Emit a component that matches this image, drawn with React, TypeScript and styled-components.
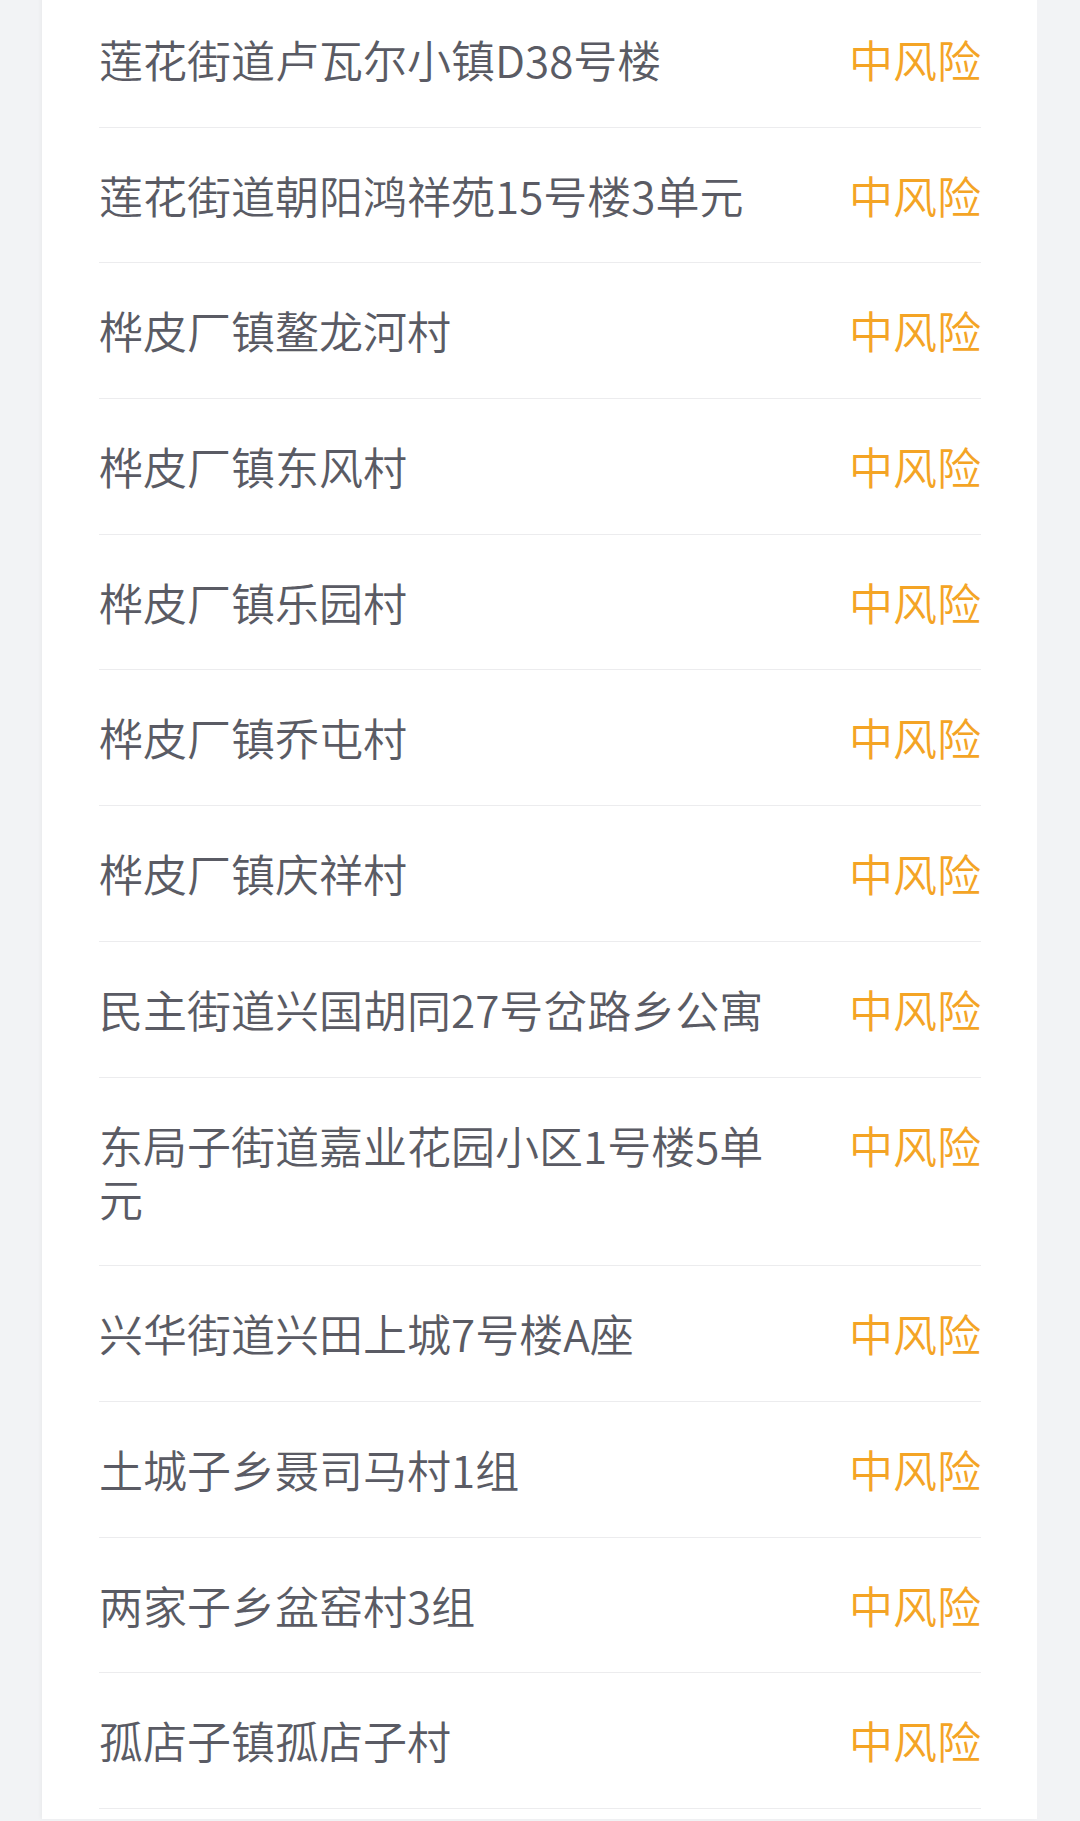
import React, { FC } from 'react';
import styled, { createGlobalStyle } from 'styled-components';

const GlobalStyle = createGlobalStyle`
  html, body {
    margin: 0;
    padding: 0;
    background-color: #f2f3f5;
  }

  body {
    font-family: 'Noto Sans CJK SC', 'Noto Sans', sans-serif;
    overflow: hidden;
  }
`;

const Page = styled.div`
  padding: 0 43px 3px 42px;
  height: 1821px;
  box-sizing: border-box;
  overflow: hidden;
`;

const Card = styled.div`
  background-color: #ffffff;
  margin-top: -8px;
  padding: 0 56px 10px 57px;
  box-shadow: -2px 0px 4px rgba(0, 0, 0, 0.03);
`;

const Row = styled.div`
  display: flex;
  justify-content: space-between;
  align-items: flex-start;
  gap: 56px;
  padding: 41px 0 40.7px;
  border-bottom: 1px solid #ececee;
`;

const Place = styled.div`
  flex: 1;
  font-size: 44px;
  font-weight: 350;
  line-height: 53px;
  color: #5a5b64;
  word-break: break-all;
`;

interface RiskProps {
  level: 'high' | 'medium';
}

const Risk = styled.div<RiskProps>`
  flex-shrink: 0;
  font-size: 44px;
  font-weight: 350;
  line-height: 53px;
  color: ${ props => props.level === 'high' ? '#e8453c' : '#f4a425' };
`;

const places = [
  '莲花街道卢瓦尔小镇D38号楼',
  '莲花街道朝阳鸿祥苑15号楼3单元',
  '桦皮厂镇鳌龙河村',
  '桦皮厂镇东风村',
  '桦皮厂镇乐园村',
  '桦皮厂镇乔屯村',
  '桦皮厂镇庆祥村',
  '民主街道兴国胡同27号岔路乡公寓',
  '东局子街道嘉业花园小区1号楼5单元',
  '兴华街道兴田上城7号楼A座',
  '土城子乡聂司马村1组',
  '两家子乡盆窑村3组',
  '孤店子镇孤店子村',
];

const App: FC = () => (
  <>
    <GlobalStyle />
    <Page>
      <Card>
        { places.map(place => (
          <Row key={ place }>
            <Place>{ place }</Place>
            <Risk level='medium'>中风险</Risk>
          </Row>
        )) }
      </Card>
    </Page>
  </>
);

export default App;
